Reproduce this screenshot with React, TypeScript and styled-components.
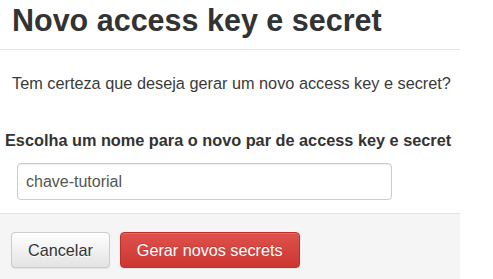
import * as React from 'react'
import styled, { createGlobalStyle } from 'styled-components'

const GlobalStyle = createGlobalStyle`
  html, body {
    margin: 0;
    padding: 0;
    background: #fff;
  }
  body {
    font-family: "Liberation Sans", Arial, Helvetica, sans-serif;
    color: #333;
  }
`

const Modal = styled.div`
  width: 460px;
  background: #fff;
`

const Header = styled.div`
  padding: 5px 12px 13px;
  border-bottom: 1px solid #e5e5e5;
`

const Title = styled.h4`
  margin: 0;
  font-size: 30.5px;
  line-height: 31px;
  font-weight: 700;
  color: #333;
`

const Body = styled.div`
  padding: 22px 5px 13px;
`

const Message = styled.p`
  margin: 0 0 35px 7px;
  font-size: 16.3px;
  line-height: 22px;
  color: #3a3a3a;
`

const FormGroup = styled.div`
  display: flex;
  flex-direction: column;
  gap: 12px;
`

const Label = styled.label`
  font-size: 16.3px;
  line-height: 22px;
  font-weight: 700;
  color: #333;
`

const TextInput = styled.input`
  box-sizing: border-box;
  width: 375px;
  height: 37px;
  margin-left: 12px;
  padding: 0 8px;
  border: 1px solid #ccc;
  border-radius: 4px;
  box-shadow: inset 0 1px 1px rgba(0, 0, 0, 0.075);
  font-family: inherit;
  font-size: 16px;
  color: #555;
  outline: none;
`

const Footer = styled.div`
  display: flex;
  gap: 10px;
  padding: 18px 11px 11px;
  background: #f5f5f5;
  border-top: 1px solid #e5e5e5;
`

const Button = styled.button<{ $danger?: boolean }>`
  box-sizing: border-box;
  height: 36px;
  padding: 0 16px;
  border-radius: 4px;
  font-family: inherit;
  font-size: 16.2px;
  line-height: 1;
  cursor: pointer;
  border: 1px solid ${(p) => (p.$danger ? '#c12e2a' : '#ccc')};
  color: ${(p) => (p.$danger ? '#fff' : '#333')};
  text-shadow: ${(p) => (p.$danger ? '0 -1px 0 rgba(0,0,0,0.15)' : '0 1px 0 #fff')};
  background-image: ${(p) =>
    p.$danger
      ? 'linear-gradient(to bottom, #df524d 0, #cc3631 100%)'
      : 'linear-gradient(to bottom, #fff 0, #e3e3e3 100%)'};
  box-shadow: inset 0 1px 0 rgba(255, 255, 255, 0.15), 0 1px 1px rgba(0, 0, 0, 0.075);
`

export default function App() {
  return (
    <>
      <GlobalStyle />
      <Modal>
        <Header>
          <Title>Novo access key e secret</Title>
        </Header>
        <Body>
          <Message>Tem certeza que deseja gerar um novo access key e secret?</Message>
          <FormGroup>
            <Label htmlFor="key-name">Escolha um nome para o novo par de access key e secret</Label>
            <TextInput id="key-name" defaultValue="chave-tutorial" />
          </FormGroup>
        </Body>
        <Footer>
          <Button>Cancelar</Button>
          <Button $danger>Gerar novos secrets</Button>
        </Footer>
      </Modal>
    </>
  )
}
